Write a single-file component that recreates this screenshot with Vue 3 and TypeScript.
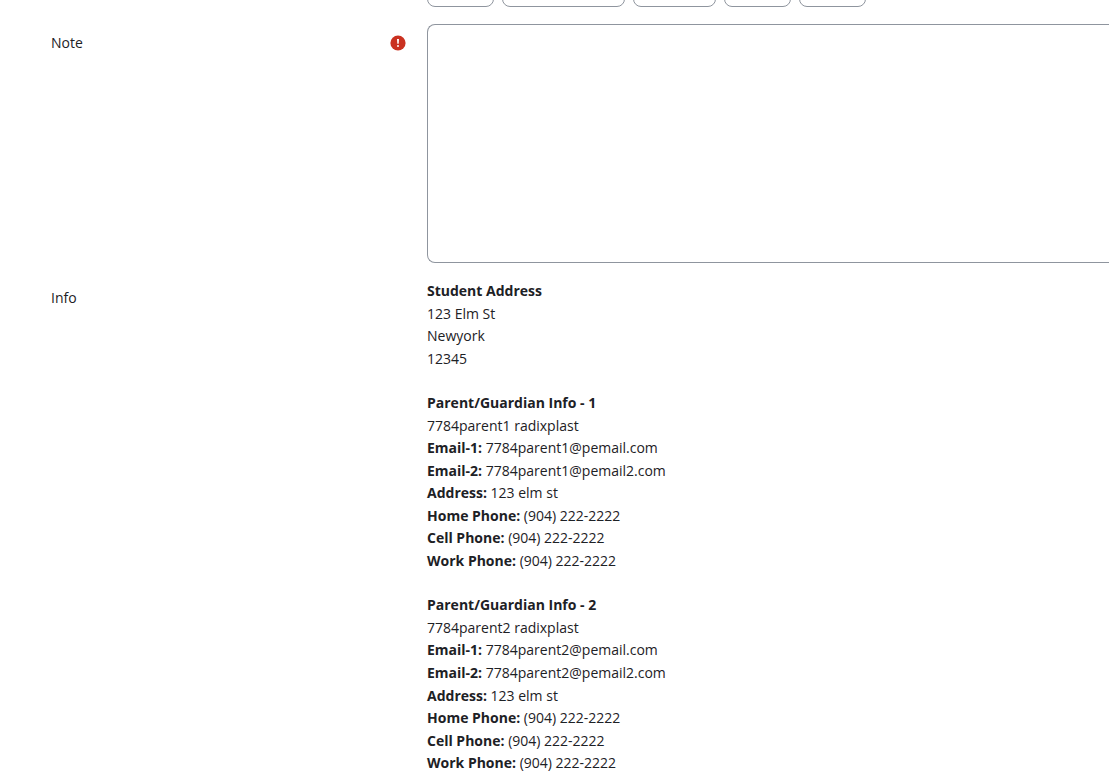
<script setup lang="ts">
import { ref } from 'vue'

interface Detail {
  label?: string
  value: string
}

interface Section {
  title: string
  details: Detail[]
}

const note = ref('')

const dateParts = [
  { id: 'day', label: 'Day', size: 'small' },
  { id: 'month', label: 'Month', size: 'large' },
  { id: 'year', label: 'Year', size: 'medium' },
  { id: 'hour', label: 'Hour', size: 'small' },
  { id: 'minute', label: 'Minute', size: 'small' },
]

function guardian(n: number): Section {
  return {
    title: `Parent/Guardian Info - ${n}`,
    details: [
      { value: `7784parent${n} radixplast` },
      { label: 'Email-1:', value: `7784parent${n}@pemail.com` },
      { label: 'Email-2:', value: `7784parent${n}@pemail2.com` },
      { label: 'Address:', value: '123 elm st' },
      { label: 'Home Phone:', value: '(904) 222-2222' },
      { label: 'Cell Phone:', value: '(904) 222-2222' },
      { label: 'Work Phone:', value: '(904) 222-2222' },
    ],
  }
}

const sections: Section[] = [
  {
    title: 'Student Address',
    details: [{ value: '123 Elm St' }, { value: 'Newyork' }, { value: '12345' }],
  },
  guardian(1),
  guardian(2),
]
</script>

<template>
  <form class="form" @submit.prevent>
    <div class="row dates">
      <div class="field selects">
        <select v-for="part in dateParts" :id="part.id" :key="part.id" :class="part.size" :aria-label="part.label"></select>
      </div>
    </div>

    <div class="row note">
      <div class="label">
        <label for="note">Note</label>
        <svg class="required" viewBox="0 0 16 16" role="img" aria-label="Required">
          <circle cx="8" cy="8" r="7.6" fill="#ca3120" />
          <path d="M7 4h2l-.3 4.8H7.3z" fill="#fff" />
          <circle cx="8" cy="11" r="1" fill="#fff" />
        </svg>
      </div>
      <div class="field">
        <textarea id="note" v-model="note"></textarea>
      </div>
    </div>

    <div class="row info">
      <div class="label">Info</div>
      <div class="field">
        <section v-for="section in sections" :key="section.title">
          <h2>{{ section.title }}</h2>
          <p v-for="(detail, i) in section.details" :key="i">
            <b v-if="detail.label">{{ detail.label }}</b>{{ detail.label ? ' ' : '' }}{{ detail.value }}
          </p>
        </section>
      </div>
    </div>
  </form>
</template>

<style>
body {
  margin: 0;
  background: #fff;
}
</style>

<style scoped>
.form {
  overflow: hidden;
  padding-left: 51px;
  color: #1d2125;
  font-family: "Segoe UI", "Open Sans", "Noto Sans", sans-serif;
  font-size: 14px;
  line-height: 1.61;
}

.row {
  display: grid;
  grid-template-columns: 376px minmax(0, 1fr);
}

.dates {
  height: 7px;
  overflow: hidden;
  align-content: end;
  margin-bottom: 17px;
}

.field {
  grid-column: 2;
}

.selects {
  display: flex;
  gap: 8px;
}

select {
  appearance: none;
  box-sizing: border-box;
  height: 36px;
  border: 1px solid #8f959e;
  border-radius: 8px;
  background: #fff;
}

.small {
  width: 67px;
}

.medium {
  width: 83px;
}

.large {
  width: 123px;
}

.label {
  display: flex;
  align-items: center;
  justify-content: space-between;
  align-self: start;
  padding: 8px 21px 0 0;
}

.required {
  width: 16px;
  height: 16px;
}

textarea {
  display: block;
  box-sizing: border-box;
  width: 100%;
  height: 239px;
  padding: 6px 12px;
  border: 1px solid #8f959e;
  border-right: 0;
  border-radius: 8px 0 0 8px;
  background: #fff;
  color: inherit;
  font: inherit;
  resize: none;
}

.info {
  margin-top: 16px;
}

.info .field {
  padding-top: 1px;
}

section + section {
  margin-top: 22px;
}

h2,
p {
  margin: 0;
  font-size: 14px;
}

h2,
b {
  font-weight: 700;
}
</style>
